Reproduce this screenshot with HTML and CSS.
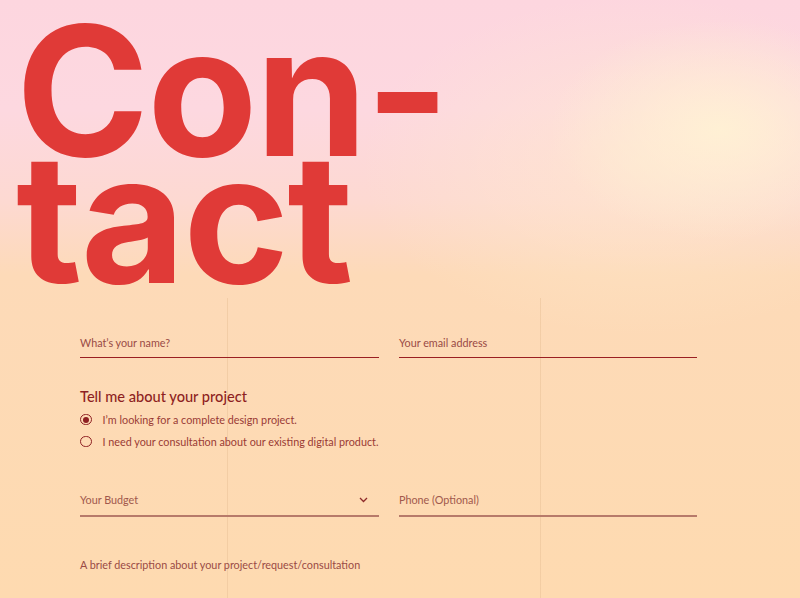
FILE: index.html
```html
<!DOCTYPE html>
<html>
<head>
<meta charset="utf-8">
<link rel="stylesheet" href="styles.css">
</head>
<body>
<div class="page">
  <h1 class="title"><span class="line">Con-</span><span class="line">tact</span></h1>
  <section class="formarea">
    <form class="form">
      <div class="row">
        <label class="field"><span class="ph">What’s your name?</span></label>
        <label class="field"><span class="ph">Your email address</span></label>
      </div>
      <div class="group">
        <h2 class="group-title">Tell me about your project</h2>
        <div class="radio checked"><span class="dot"></span><span>I’m looking for a complete design project.</span></div>
        <div class="radio"><span class="dot"></span><span>I need your consultation about our existing digital product.</span></div>
      </div>
      <div class="row row2">
        <label class="field soft"><span class="ph">Your Budget</span>
          <svg class="chev" width="9" height="6" viewBox="0 0 9 6"><path d="M1 1l3.5 3.5L8 1" fill="none" stroke="#8e2a2a" stroke-width="1.3"/></svg>
        </label>
        <label class="field soft"><span class="ph">Phone (Optional)</span></label>
      </div>
      <p class="desc">A brief description about your project/request/consultation</p>
    </form>
  </section>
</div>
</body>
</html>
```

FILE: styles.css
```css
html, body { margin: 0; padding: 0; }
body {
  width: 800px;
  height: 598px;
  overflow: hidden;
  font-family: "Lato", "Noto Sans", sans-serif;
}
.page {
  height: 598px;
  background:
    radial-gradient(ellipse 170px 110px at 720px 130px, rgba(255,241,212,0.95), rgba(255,241,212,0) 100%),
    radial-gradient(ellipse 280px 170px at 640px 165px, rgba(255,235,205,0.6), rgba(255,235,205,0) 100%),
    linear-gradient(180deg, #fdd6df 0px, #fdd8e0 110px, #fdd9d2 200px, #fddab8 275px, #fedab0 598px);
}
.title {
  margin: 0;
  padding: 0 0 0 16px;
  height: 298px;
  box-sizing: border-box;
  font-family: "Inter", sans-serif;
  font-weight: 700;
  font-size: 180px;
  color: #e03a37;
  letter-spacing: -2px;
  display: flex;
  flex-direction: column;
}
.line {
  display: block;
  height: 127px;
  line-height: 127px;
  overflow: visible;
}
.line:first-child { margin-top: 27px; }
.formarea {
  background:
    linear-gradient(90deg, transparent 227px, rgba(232,192,150,0.5) 227px, rgba(232,192,150,0.5) 228px, transparent 228px,
      transparent 540px, rgba(232,192,150,0.5) 540px, rgba(232,192,150,0.5) 541px, transparent 541px);
  height: 300px;
  padding-top: 30px;
  box-sizing: border-box;
}
.form {
  margin-left: 80px;
  width: 617px;
  color: #8e2a2a;
}
.row {
  display: grid;
  grid-template-columns: 299px 298px;
  column-gap: 20px;
}
.field {
  display: flex;
  align-items: center;
  justify-content: space-between;
  height: 29px;
  border-bottom: 1.5px solid #9a1f22;
  font-size: 10.8px;
  color: #9a4a45;
}
.field.soft { height: 31px; border-bottom: 2px solid #b77a6a; color: #a0584c; }
.chev { margin-right: 11px; }
.group { margin-top: 29.5px; }
.group-title {
  margin: 0 0 3px;
  font-size: 14.6px;
  line-height: 18px;
  font-weight: 500;
  color: #8e1f22;
}
.radio {
  display: flex;
  align-items: center;
  gap: 11px;
  font-size: 10.8px;
  color: #9a3a35;
  height: 22px;
}
.dot {
  width: 9.5px; height: 9.5px;
  border: 1.5px solid #8e1f22;
  border-radius: 50%;
  position: relative;
  flex: none;
}
.radio.checked .dot::after {
  content: "";
  position: absolute;
  left: 1.75px; top: 1.75px;
  width: 6px; height: 6px;
  border-radius: 50%;
  background: #8e1f22;
}
.row2 { margin-top: 31.5px; }
.desc {
  margin: 40.5px 0 0;
  font-size: 10.8px;
  line-height: 14px;
  color: #9a4a45;
}
```
